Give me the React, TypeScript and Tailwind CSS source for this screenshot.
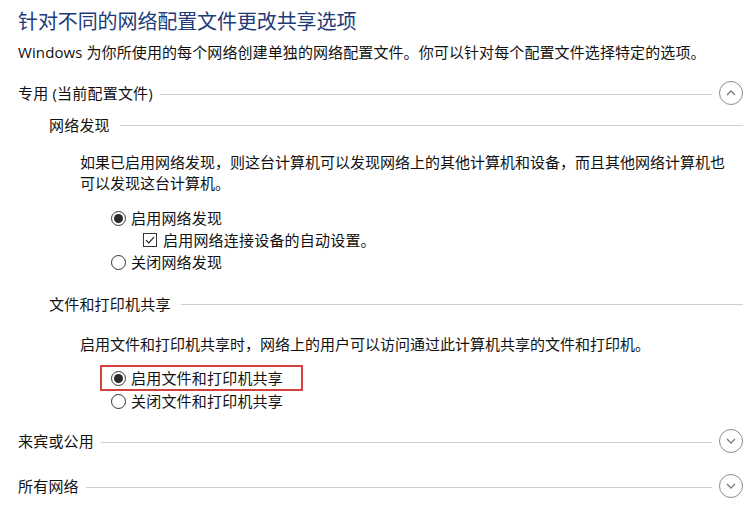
import React from "react";

const font = {
  fontFamily: "'Open Sans', 'Noto Sans CJK SC', sans-serif",
};

function Chevron({ up }: { up?: boolean }) {
  return (
    <span className="flex items-center justify-center w-[24px] h-[24px] rounded-full border border-[#8c8c8c] shrink-0">
      <svg width="12" height="12" viewBox="0 0 12 12" fill="none">
        <path
          d={up ? "M2 8 L6 4 L10 8" : "M2 4 L6 8 L10 4"}
          stroke="#7a7a7a"
          strokeWidth="1.3"
        />
      </svg>
    </span>
  );
}

function SectionHeader({
  title,
  up,
}: {
  title: string;
  up?: boolean;
}) {
  return (
    <div className="flex items-center h-[24px] gap-[7px]">
      <span className="text-[15px] leading-none text-[#111] whitespace-nowrap tracking-[0.2px]">
        {title}
      </span>
      <div className="flex-1 h-px bg-[#cfcfcf] mt-[2px]" />
      <Chevron up={up} />
    </div>
  );
}

function SubHeader({ title }: { title: string }) {
  return (
    <div className="flex items-center h-[24px] gap-[10px] pl-[31px]">
      <span className="text-[15px] leading-none text-[#111] whitespace-nowrap tracking-[0.2px]">
        {title}
      </span>
      <div className="flex-1 h-px bg-[#cfcfcf]" />
    </div>
  );
}

function Radio({ checked, label }: { checked?: boolean; label: string }) {
  return (
    <div className="flex items-center gap-[5px]">
      <span className="flex items-center justify-center w-[15px] h-[15px] rounded-full border border-[#333] shrink-0">
        {checked && (
          <span className="w-[9px] h-[9px] rounded-full bg-[#2a2a2a]" />
        )}
      </span>
      <span className="text-[15px] leading-none text-[#111] tracking-[0.2px]">
        {label}
      </span>
    </div>
  );
}

export default function App() {
  return (
    <div
      className="w-[752px] h-[516px] bg-white overflow-hidden pl-[18px] pr-[9px] flex flex-col"
      style={font}
    >
      <div className="h-[44px] flex items-center">
        <h1 className="text-[20px] leading-none text-[#1e3a78] tracking-[-0.1px]">
          针对不同的网络配置文件更改共享选项
        </h1>
      </div>
      <div className="h-[16px] flex items-center">
        <p className="text-[15px] leading-none text-[#111] whitespace-nowrap tracking-[0.1px]">
          Windows 为你所使用的每个网络创建单独的网络配置文件。你可以针对每个配置文件选择特定的选项。
        </p>
      </div>

      <div className="mt-[21px]">
        <SectionHeader title="专用 (当前配置文件)" up />
      </div>

      <div className="mt-[8px]">
        <SubHeader title="网络发现" />
      </div>

      <p className="mt-[15px] pl-[62px] text-[15px] leading-[21px] text-[#111] whitespace-nowrap">
        如果已启用网络发现，则这台计算机可以发现网络上的其他计算机和设备，而且其他网络计算机也
        <br />
        可以发现这台计算机。
      </p>

      <div className="mt-[13px] pl-[93px] flex flex-col">
        <div className="h-[22px] flex items-center">
          <Radio checked label="启用网络发现" />
        </div>
        <div className="h-[22px] flex items-center pl-[32px] gap-[6px]">
          <span className="flex items-center justify-center w-[14px] h-[14px] border border-[#333] shrink-0">
            <svg width="12" height="12" viewBox="0 0 12 12" fill="none">
              <path d="M2 6.2 L4.8 9 L10 3.2" stroke="#222" strokeWidth="1.2" />
            </svg>
          </span>
          <span className="text-[15px] leading-none text-[#111] tracking-[0.2px]">
            启用网络连接设备的自动设置。
          </span>
        </div>
        <div className="h-[22px] flex items-center">
          <Radio label="关闭网络发现" />
        </div>
      </div>

      <div className="mt-[19px]">
        <SubHeader title="文件和打印机共享" />
      </div>

      <p className="mt-[18px] pl-[62px] text-[15px] leading-[21px] text-[#111] whitespace-nowrap">
        启用文件和打印机共享时，网络上的用户可以访问通过此计算机共享的文件和打印机。
      </p>

      <div className="mt-[10px] ml-[82px] w-[203px] h-[26px] border-2 border-[#d4403e] flex items-center pl-[9px]">
        <Radio checked label="启用文件和打印机共享" />
      </div>
      <div className="h-[20px] flex items-center pl-[93px]">
        <Radio label="关闭文件和打印机共享" />
      </div>

      <div className="mt-[18px]">
        <SectionHeader title="来宾或公用" />
      </div>
      <div className="mt-[21px]">
        <SectionHeader title="所有网络" />
      </div>
    </div>
  );
}
